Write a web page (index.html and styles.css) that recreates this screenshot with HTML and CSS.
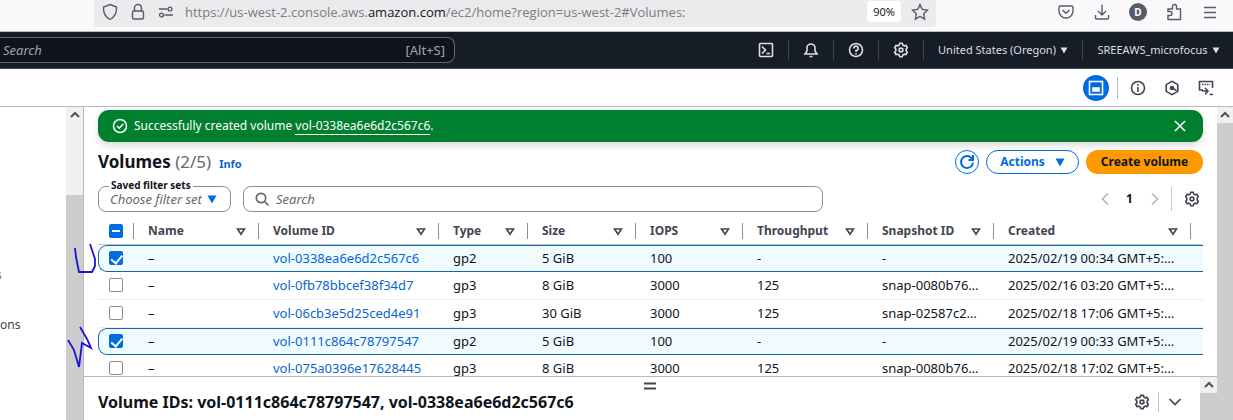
FILE: index.html
```html
<!DOCTYPE html>
<html lang="en">
<head>
<meta charset="utf-8">
<title>Volumes | EC2</title>
<link rel="stylesheet" href="styles.css">
</head>
<body>
<svg class="defs" aria-hidden="true">
  <symbol id="gear" viewBox="0 0 16 16"><path d="M6.200 3 6.800 1.300h2.400L9.800 3l1.400.8 1.800-.3 1.300 2.100L13.200 7v2l1.100 1.400-1.300 2.100-1.800-.3-1.400.8-.6 1.700H6.800L6.200 13l-1.400-.8-1.800.3-1.300-2.100L2.800 9V7L1.700 5.600 3 3.500l1.800.3z"/><circle cx="8" cy="8" r="1.900"/></symbol>
  <symbol id="down" viewBox="0 0 10 9"><path d="M.5.500h9L5 8.500z" fill="currentColor" stroke="none"/></symbol>
  <symbol id="sort" viewBox="0 0 10 9"><path d="M1.500 2h7L5 7.200z"/></symbol>
  <symbol id="up" viewBox="0 0 10 8"><path d="M1 6l4-4 4 4"/></symbol>
</svg>

<header class="browser">
  <div class="urlbar">
    <svg class="i18" viewBox="0 0 18 18"><path d="M9 1.500 15.500 4c.4 5-1.200 9.500-6.500 12.500C3.700 13.500 2.100 9 2.500 4z"/></svg>
    <svg class="i18" viewBox="0 0 18 18"><rect x="3.500" y="8" width="11" height="8" rx="1.500"/><path d="M5.500 8V5a3.500 3.500 0 0 1 7 0v3"/></svg>
    <svg class="i18" viewBox="0 0 18 18"><path d="M2 6h8.500M7.500 12H16"/><circle cx="13" cy="6" r="1.900"/><circle cx="4.500" cy="12" r="1.900"/></svg>
    <span class="url">https://us-west-2.console.aws.<b>amazon.com</b>/ec2/home?region=us-west-2#Volumes:</span>
    <button class="zoom">90%</button>
    <button aria-label="Bookmark"><svg class="i18" viewBox="0 0 18 18"><path d="m9 1.500 2.300 4.900 5.200.7-3.800 3.700.9 5.300L9 13.500l-4.600 2.600.9-5.300L1.500 7.100l5.200-.7z"/></svg></button>
  </div>
  <div class="tools">
    <button aria-label="Pocket"><svg class="i18" viewBox="0 0 18 18"><path d="M3.500 3h11a1.500 1.500 0 0 1 1.500 1.500V8A7 7 0 0 1 2 8V4.500A1.500 1.500 0 0 1 3.500 3zM5.500 7 9 10.300 12.500 7"/></svg></button>
    <button aria-label="Downloads"><svg class="i18" viewBox="0 0 18 18"><path d="M9 1.500v10M5 8l4 4 4-4M2.500 12v3a1 1 0 0 0 1 1h11a1 1 0 0 0 1-1v-3"/></svg></button>
    <button class="avatar" aria-label="Account">D</button>
    <button aria-label="Extensions"><svg class="i18" viewBox="0 0 18 18"><path d="M3 16.500v-4h2a2 2 0 0 0 0-4H3V6h4.500V3.500a2 2 0 0 1 4 0V6h4v10.500z"/></svg></button>
    <button aria-label="Menu"><svg class="i18" viewBox="0 0 18 18"><path d="M3 4.500h12M3 9.500h12M3 14.500h12"/></svg></button>
  </div>
</header>

<nav class="awsnav">
  <label class="navsearch"><input type="text" placeholder="Search" aria-label="Search services"><span>[Alt+S]</span></label>
  <div class="navitems">
    <button aria-label="CloudShell"><svg class="i16" viewBox="0 0 16 16"><rect x="1.500" y="1.500" width="13" height="13" rx="1"/><path d="m4 4.500 3.500 3.500L4 11.500M8.500 11.500H12"/></svg></button>
    <button aria-label="Notifications"><svg class="i16" viewBox="0 0 16 16"><path d="M4 6a4 4 0 0 1 8 0v3l2 3H2l2-3zM6.500 14.500h3"/></svg></button>
    <button aria-label="Help"><svg class="i16" viewBox="0 0 16 16"><circle cx="8" cy="8" r="6.500"/><path d="M5.800 6.500A2.200 2.200 0 1 1 8 8.500V10M8 11v1.500"/></svg></button>
    <button aria-label="Settings"><svg class="i16"><use href="#gear"/></svg></button>
    <button class="region">United States (Oregon) <svg class="tri"><use href="#down"/></svg></button>
    <button class="account">SREEAWS_microfocus <svg class="tri"><use href="#down"/></svg></button>
  </div>
</nav>

<div class="toolbar">
  <button class="round" aria-label="Split panel"><svg class="i16" viewBox="0 0 16 16"><rect x="1.500" y="1.500" width="13" height="13"/><path d="M5 8h6v3H5z" fill="currentColor"/></svg></button>
  <div class="side-tools">
    <button aria-label="Info"><svg class="i16" viewBox="0 0 16 16"><circle cx="8" cy="8" r="6.500"/><path d="M8 7v5M8 4v1.800"/></svg></button>
    <button aria-label="Recent"><svg class="i16" viewBox="0 0 16 16"><path d="m8 1.300 5.800 3.300v6.800L8 14.700l-5.800-3.300V4.600z"/><circle cx="8" cy="8" r="1.500" fill="currentColor"/><path d="m8 8 4.500 2.500"/></svg></button>
    <button aria-label="Console"><svg class="i16" viewBox="0 0 16 16"><path d="M5 10H1.500V1.500h13V8M4 11h5M7 8l3 3-3 3.500M11.500 14.500H15"/><path d="M4 4.500h8" stroke-dasharray="1.500 1"/></svg></button>
  </div>
</div>

<div class="workspace">
  <aside class="sidenav"><a href="#">s</a><a href="#">ons</a></aside>
  <div class="bar side-bar"><div class="arrow"><svg class="chev"><use href="#up"/></svg></div></div>
  <main class="main">
    <section class="page">
      <div class="flash">
        <svg class="i16" viewBox="0 0 16 16"><circle cx="8" cy="8" r="6.500"/><path d="m5 8 2.200 2.200L11.200 6"/></svg>
        <p>Successfully created volume <a href="#">vol-0338ea6e6d2c567c6</a>.</p>
        <button aria-label="Dismiss"><svg class="i16" viewBox="0 0 16 16"><path d="m3 3 10 10M13 3 3 13"/></svg></button>
      </div>
      <div class="heading">
        <h1>Volumes <span>(2/5)</span></h1><a class="info" href="#">Info</a>
        <div class="actions">
          <button class="refresh" aria-label="Refresh"><svg class="i16" viewBox="0 0 16 16"><path d="M14 8.500A6 6 0 1 1 12.500 4L14 5.500M14 1v5H9.500"/></svg></button>
          <button class="outline">Actions <svg class="tri"><use href="#down"/></svg></button>
          <button class="primary">Create volume</button>
        </div>
      </div>
      <div class="filters">
        <div class="saved"><label for="saved">Saved filter sets</label><select id="saved"><option>Choose filter set</option></select><svg class="tri"><use href="#down"/></svg></div>
        <label class="search"><svg class="i16" viewBox="0 0 16 16"><circle cx="7" cy="7" r="4.700"/><path d="m10.500 10.500 4 4"/></svg><input type="text" placeholder="Search" aria-label="Search volumes"></label>
        <div class="pager">
          <button class="dim" aria-label="Previous page"><svg class="i16" viewBox="0 0 16 16"><path d="M11 2.500 5.500 8l5.500 5.500"/></svg></button>
          <button class="current">1</button>
          <button class="dim" aria-label="Next page"><svg class="i16" viewBox="0 0 16 16"><path d="M5 2.500 10.500 8 5 13.500"/></svg></button>
          <button class="prefs" aria-label="Preferences"><svg class="i16"><use href="#gear"/></svg></button>
        </div>
      </div>
      <table>
        <colgroup><col class="c-check"><col class="c-name"><col class="c-id"><col class="c-type"><col class="c-size"><col class="c-iops"><col class="c-thr"><col class="c-snap"><col><col class="c-end"></colgroup>
        <thead><tr>
          <th><input class="some" type="checkbox" aria-label="Select all"></th>
          <th><div>Name<svg class="tri"><use href="#sort"/></svg></div></th>
          <th><div>Volume ID<svg class="tri"><use href="#sort"/></svg></div></th>
          <th><div>Type<svg class="tri"><use href="#sort"/></svg></div></th>
          <th><div>Size<svg class="tri"><use href="#sort"/></svg></div></th>
          <th><div>IOPS<svg class="tri"><use href="#sort"/></svg></div></th>
          <th><div>Throughput<svg class="tri"><use href="#sort"/></svg></div></th>
          <th><div>Snapshot ID<svg class="tri"><use href="#sort"/></svg></div></th>
          <th><div>Created<svg class="tri"><use href="#sort"/></svg></div></th>
          <th></th>
        </tr></thead>
        <tbody>
          <tr class="on"><td><input type="checkbox" checked aria-label="Select vol-0338ea6e6d2c567c6"></td><td>–</td><td><a href="#">vol-0338ea6e6d2c567c6</a></td><td>gp2</td><td>5 GiB</td><td>100</td><td>-</td><td>-</td><td>2025/02/19 00:34 GMT+5:…</td><td></td></tr>
          <tr><td><input type="checkbox" aria-label="Select vol-0fb78bbcef38f34d7"></td><td>–</td><td><a href="#">vol-0fb78bbcef38f34d7</a></td><td>gp3</td><td>8 GiB</td><td>3000</td><td>125</td><td>snap-0080b76…</td><td>2025/02/16 03:20 GMT+5:…</td><td></td></tr>
          <tr><td><input type="checkbox" aria-label="Select vol-06cb3e5d25ced4e91"></td><td>–</td><td><a href="#">vol-06cb3e5d25ced4e91</a></td><td>gp3</td><td>30 GiB</td><td>3000</td><td>125</td><td>snap-02587c2…</td><td>2025/02/18 17:06 GMT+5:…</td><td></td></tr>
          <tr class="on"><td><input type="checkbox" checked aria-label="Select vol-0111c864c78797547"></td><td>–</td><td><a href="#">vol-0111c864c78797547</a></td><td>gp2</td><td>5 GiB</td><td>100</td><td>-</td><td>-</td><td>2025/02/19 00:33 GMT+5:…</td><td></td></tr>
          <tr><td><input type="checkbox" aria-label="Select vol-075a0396e17628445"></td><td>–</td><td><a href="#">vol-075a0396e17628445</a></td><td>gp3</td><td>8 GiB</td><td>3000</td><td>125</td><td>snap-0080b76…</td><td>2025/02/18 17:02 GMT+5:…</td><td></td></tr>
        </tbody>
      </table>
    </section>
    <section class="split">
      <div class="split-body">
        <div class="grip"><svg class="handle" viewBox="0 0 12 8"><path d="M0 1.500h12M0 6.500h12"/></svg></div>
        <div class="split-head">
          <h2>Volume IDs: vol-0111c864c78797547, vol-0338ea6e6d2c567c6</h2>
          <button aria-label="Panel preferences"><svg class="i16"><use href="#gear"/></svg></button>
          <button class="collapse" aria-label="Collapse"><svg class="i16" viewBox="0 0 16 16"><path d="M2.500 5 8 10.500 13.500 5"/></svg></button>
        </div>
      </div>
      <div class="bar"><div class="arrow"><svg class="chev"><use href="#up"/></svg></div></div>
    </section>
  </main>
  <div class="bar page-bar"><div class="arrow"><svg class="chev"><use href="#up"/></svg></div></div>
  <svg class="ink" viewBox="0 0 30 124"><path d="M9 6l1 9 3 15h13l3-6v-7L24 2M2 98l6 10 5 17 3-24 9 5-4-9-7-12"/></svg>
</div>
</body>
</html>
```
FILE: styles.css
```css
* { box-sizing: border-box; }
body {
  margin: 0;
  height: 100vh;
  display: flex;
  flex-direction: column;
  overflow: hidden;
  background: #fff;
  color: #0f141a;
  font: 12px/18px "Noto Sans", "Open Sans", sans-serif;
}
button, input, select { font: inherit; color: inherit; background: none; border: 0; padding: 0; margin: 0; }
button { display: flex; align-items: center; justify-content: center; }
svg { display: block; flex: none; fill: none; stroke: currentColor; stroke-width: 2; }
a { color: #0a66cf; text-decoration: none; }
h1, h2, p { margin: 0; }
.defs { position: absolute; width: 0; height: 0; }
.i16 { width: 16px; height: 16px; }
.i18 { width: 18px; height: 18px; }
.tri { width: 10px; height: 9px; }
.chev { width: 10px; height: 8px; }

.browser { display: flex; flex: none; height: 32px; background: #f9f9fb; border-bottom: 1px solid #b9b9be; color: #5b5b66; padding-left: 94px; }
.browser svg { stroke-width: 1.4; }
.urlbar { flex: 1; display: flex; align-items: center; gap: 10px; height: 27px; padding: 0 7px 4px; background: #ebebed; border-radius: 0 0 4px 4px; }
.url { flex: 1; font: 13px/20px "Open Sans", sans-serif; color: #7b7b80; white-space: nowrap; }
.url b { font-weight: 400; color: #15141a; }
.zoom { width: 34px; height: 21px; background: #fff; border-radius: 3px; font-size: 11px; color: #15141a; }
.tools { display: flex; align-items: center; gap: 18px; height: 23px; padding: 0 14px 0 121px; }
.avatar { width: 18px; height: 18px; border-radius: 50%; background: #5b5b66; color: #fff; font-size: 10px; font-weight: 700; }

.awsnav { display: flex; flex: none; height: 37px; align-items: center; background: #161d26; color: #dedee8; border-bottom: 1px solid #424650; }
.navsearch { display: flex; align-items: center; width: 455px; height: 26px; padding: 0 9px 0 3px; border: 1px solid #656871; border-left: 0; border-radius: 0 8px 8px 0; background: #0f141a; color: #a4a4ad; font-size: 13px; }
.navsearch input { flex: 1; min-width: 0; }
.navsearch input::placeholder { color: #a4a4ad; font-style: italic; opacity: 1; }
.navitems { display: flex; flex: 1; justify-content: flex-end; padding-right: 7px; font-size: 11px; }
.navitems button { width: 45px; height: 20px; gap: 4px; border-left: 1px solid #424650; white-space: nowrap; }
.navitems button:first-child { border-left: 0; }
.navitems svg { stroke-width: 1.6; }
.navitems .tri { width: 8px; height: 7px; }
.navitems .region { width: 159px; }
.navitems .account { width: 144px; padding-left: 8px; }

.toolbar { display: flex; flex: none; height: 38px; align-items: center; justify-content: flex-end; padding-right: 19px; border-bottom: 1px solid #b4b9c1; color: #424650; }
.toolbar svg { stroke-width: 1.6; }
.round { width: 26px; height: 26px; border-radius: 50%; background: #006ce0; color: #fff; }
.side-tools { display: flex; align-items: center; gap: 18px; height: 22px; margin-left: 8px; padding-left: 12px; border-left: 1px solid #b4b9c1; }

.workspace { position: relative; display: flex; flex: 1; min-height: 0; }
.sidenav { display: flex; flex-direction: column; gap: 32px; width: 66px; padding-top: 159px; }
.sidenav a { color: #424650; }
.sidenav a:first-child { color: #4d83b5; text-indent: -4px; }
.bar { flex: none; width: 17px; background: #cdcdcd; }
.page-bar { width: 16px; }
.arrow { display: flex; align-items: center; justify-content: center; height: 16px; background: #f0f0f0; color: #505050; }
.side-bar .arrow { height: 88px; align-items: flex-start; padding-top: 4px; }
.main { display: flex; flex: 1; min-width: 0; flex-direction: column; border-left: 1px solid #b4b9c1; }
.page { flex: 1; min-height: 0; overflow: hidden; padding: 3px 14px 0; }

.flash { display: flex; align-items: center; gap: 6px; height: 32px; padding: 0 15px 0 14px; border-radius: 11px; background: #00802f; color: #fff; box-shadow: 0 4px 7px #0002; }
.flash svg { stroke-width: 1.5; }
.flash p { flex: 1; }
.flash a { color: #fff; border-bottom: 1px solid #fff; }
.heading { display: flex; align-items: center; height: 40px; }
h1 { font-size: 17px; line-height: 24px; }
h1 span { font-weight: 400; color: #656871; }
.info { margin: 4px 0 0 8px; font-size: 11px; font-weight: 700; }
.actions { display: flex; gap: 7px; margin-left: auto; font-weight: 700; }
.actions button { height: 24px; border-radius: 12px; }
.actions .refresh { width: 24px; border: 1px solid #006ce0; color: #006ce0; }
.actions .outline { width: 93px; gap: 10px; border: 1px solid #006ce0; color: #006ce0; }
.actions .primary { width: 117px; background: #ff9900; }

.filters { display: flex; align-items: center; gap: 12px; margin-top: 4px; height: 26px; }
.saved { position: relative; display: flex; align-items: center; width: 133px; height: 26px; padding: 0 13px 0 11px; border: 1px solid #8c8c94; border-radius: 8px; }
.saved label { position: absolute; top: -11px; left: 10px; padding: 0 2px; background: #fff; font-size: 10px; font-weight: 700; }
.saved select { flex: 1; min-width: 0; appearance: none; color: #656871; font-style: italic; font-size: 13px; }
.saved .tri { color: #006ce0; }
.search { display: flex; align-items: center; gap: 6px; width: 580px; height: 26px; padding: 0 10px; border: 1px solid #8c8c94; border-radius: 8px; color: #656871; font-size: 13px; }
.search svg { stroke-width: 1.7; }
.search input { flex: 1; min-width: 0; }
.search input::placeholder { color: #656871; font-style: italic; opacity: 1; }
.pager { display: flex; align-items: center; margin-left: auto; color: #424650; }
.pager button { width: 25px; height: 24px; }
.pager svg { stroke-width: 1.6; }
.pager .dim { color: #b4b4bb; }
.pager .current { color: #0f141a; font-weight: 700; }
.pager .prefs { width: 32px; margin-left: 4px; padding-left: 12px; justify-content: flex-start; border-left: 1px solid #c6c6cd; }

table { width: 100%; margin-top: 6px; table-layout: fixed; border-spacing: 0; }
.c-check { width: 35px; } .c-name { width: 125px; } .c-id { width: 180px; } .c-type { width: 89px; } .c-size { width: 108px; }
.c-iops { width: 107px; } .c-thr { width: 125px; } .c-snap { width: 126px; } .c-end { width: 13px; }
th { height: 27px; padding: 0; border-bottom: 1px solid #c6c6cd; text-align: left; color: #424650; }
th div { display: flex; align-items: center; justify-content: space-between; height: 16px; padding: 0 12px 0 14px; border-left: 1px solid #8c8c94; }
th .tri { stroke-width: 1.7; }
th:last-child { background: linear-gradient(#8c8c94, #8c8c94) 0 50% / 1px 16px no-repeat; }
td { height: 28px; padding: 0 0 1px 15px; border-bottom: 1px solid #ebebf0; font-size: 13px; line-height: 16px; white-space: nowrap; overflow: hidden; }
th:first-child, td:first-child { padding-left: 11px; }
td:last-child { padding: 0; }
.on td { height: 27px; background: #f0fbff; border-top: 1px solid #1067ae; border-bottom: 1px solid #1067ae; }
.on td:first-child { border-left: 1px solid #1067ae; border-radius: 9px 0 0 9px; padding-left: 10px; }
input[type="checkbox"] { display: block; appearance: none; width: 14px; height: 14px; border: 1px solid #8c8c94; border-radius: 2px; background: #fff; }
input[type="checkbox"]:checked, input.some[type="checkbox"] { position: relative; border-color: #006ce0; background: #006ce0; }
input[type="checkbox"]:checked::after { content: ""; position: absolute; left: 4px; top: 1px; width: 5px; height: 9px; border: solid #fff; border-width: 0 2px 2px 0; transform: rotate(40deg); transform-origin: 50% 40%; }
input.some::after { content: ""; position: absolute; left: 2px; top: 5px; width: 8px; height: 2px; background: #fff; }

.split { display: flex; flex: none; height: 44px; border-top: 1px solid #b4b9c1; background: #fff; }
.split-body { flex: 1; min-width: 0; padding: 5px 10px 0 14px; color: #424650; }
.grip { display: flex; justify-content: center; margin-right: -12px; }
.handle { width: 12px; height: 8px; }
.split-head { display: flex; align-items: center; height: 24px; }
.split-head h2 { flex: 1; font-size: 16px; line-height: 24px; color: #0f141a; }
.split-head button { width: 32px; height: 20px; }
.split-head svg { stroke-width: 1.7; }
.split-head .collapse { border-left: 1px solid #c6c6cd; }
.ink { position: absolute; left: 66px; top: 135px; width: 30px; height: 124px; overflow: visible; stroke: #1a12d8; stroke-width: 1.8; }
```
